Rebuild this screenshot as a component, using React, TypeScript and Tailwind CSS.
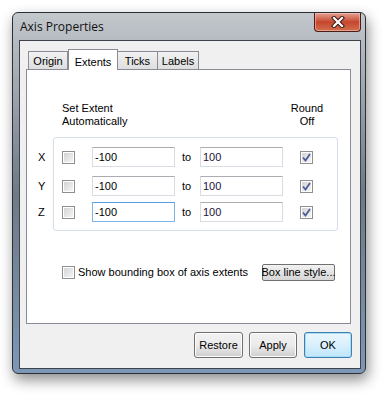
import React from 'react'

const ui = { fontFamily: '"Liberation Sans", Arial, sans-serif' }

const Check = ({ checked = false }: { checked?: boolean }) => (
    <span className="flex h-[13px] w-[13px] shrink-0 items-center justify-center border border-[#8e8f8f] bg-white p-px">
        <span className="flex h-full w-full items-center justify-center bg-gradient-to-br from-[#d4d4d4] to-[#f4f4f4]">
            {checked && (
                <svg width="9" height="9" viewBox="0 0 9 9">
                    <path d="M1 4.5 L3.5 7.5 L8 1" fill="none" stroke="#4a5a95" strokeWidth="1.7" />
                </svg>
            )}
        </span>
    </span>
)

const Field = ({ value, focused = false, dark = false }: { value: string; focused?: boolean; dark?: boolean }) => (
    <div
        className={
            focused
                ? 'flex h-[20px] w-[83px] items-center border border-[#7eb4ea] border-t-[#569de5] bg-white pl-[2px]'
                : 'flex h-[20px] w-[83px] items-center border border-[#d9dde3] border-t-[#abadb3] bg-white pl-[2px]'
        }
    >
        <span className={dark ? 'text-[11px] leading-none text-[#24103a]' : 'text-[11px] leading-none text-black'}>
            {value}
        </span>
    </div>
)

const Button = ({ label, width, primary = false }: { label: string; width: string; primary?: boolean }) => (
    <div
        className={
            'flex h-[26px] items-center justify-center rounded-[3px] border text-[11px] text-black ' +
            width +
            (primary
                ? ' border-[#3c7fb1] bg-gradient-to-b from-[#eaf6fd] via-[#d9f0fc] to-[#bee6fd] shadow-[inset_0_0_0_1px_#a8dcf7]'
                : ' border-[#707070] bg-gradient-to-b from-[#f2f2f2] via-[#ebebeb] to-[#cfcfcf] shadow-[inset_0_0_0_1px_#fcfcfc]')
        }
    >
        {label}
    </div>
)

const rows = [
    { axis: 'X', gap: 'mt-0', focused: false },
    { axis: 'Y', gap: 'mt-[9px]', focused: false },
    { axis: 'Z', gap: 'mt-[6px]', focused: true },
]

export default function App() {
    return (
        <div className="h-[396px] w-[386px] bg-white pl-[12px] pt-[12px]" style={ui}>
            <div className="flex h-[362px] w-[354px] flex-col rounded-[6px] border border-[#2b3036] bg-gradient-to-b from-[#c3c8cd] via-[#6f7a86] to-[#7d97b6] shadow-[2px_6px_14px_rgba(0,0,0,0.45)]">
                {/* title bar */}
                <div className="flex h-[27px] shrink-0 items-start">
                    <span
                        className="ml-[7px] mt-[5px] whitespace-nowrap text-[12px] text-[#111]"
                        style={{ fontFamily: '"Open Sans", "Noto Sans", sans-serif' }}
                    >
                        Axis Properties
                    </span>
                    <div className="ml-auto mr-[4px] flex h-[19px] w-[47px] items-center justify-center rounded-b-[4px] border border-t-0 border-[#4b1d16] bg-gradient-to-b from-[#e3a193] via-[#c6452c] to-[#d2704e] shadow-[inset_0_0_0_1px_rgba(255,210,200,0.5)]">
                        <svg width="14" height="12" viewBox="0 0 14 12">
                            <path d="M3 2 L11 10 M11 2 L3 10" stroke="#3a1a14" strokeWidth="4.2" strokeLinecap="square" />
                            <path d="M3 2 L11 10 M11 2 L3 10" stroke="#ffffff" strokeWidth="2.2" strokeLinecap="square" />
                        </svg>
                    </div>
                </div>

                {/* client area */}
                <div className="ml-[6px] flex h-[329px] w-[342px] flex-col border border-[#3d434a] bg-[#f0f0f0] pl-[6px] pt-[8px]">
                    {/* tabs */}
                    <div className="flex h-[20px] items-end pl-[2px] text-[11px]">
                        <div className="flex h-[18px] w-[40px] items-center justify-center border border-b-0 border-[#898c95] bg-gradient-to-b from-[#f2f2f2] to-[#dedede] pt-px">
                            Origin
                        </div>
                        <div className="relative z-10 -mb-px flex h-[21px] w-[50px] items-start justify-center border border-b-0 border-[#898c95] bg-white pt-[4px]">
                            Extents
                        </div>
                        <div className="flex h-[18px] w-[40px] items-center justify-center border border-b-0 border-l-0 border-[#898c95] bg-gradient-to-b from-[#f2f2f2] to-[#dedede] pt-px">
                            Ticks
                        </div>
                        <div className="flex h-[18px] w-[41px] items-center justify-center border border-b-0 border-l-0 border-[#898c95] bg-gradient-to-b from-[#f2f2f2] to-[#dedede] pt-px">
                            Labels
                        </div>
                    </div>

                    {/* tab panel */}
                    <div className="flex h-[255px] w-[325px] flex-col whitespace-nowrap border border-[#898c95] bg-white text-[11px] text-black">
                        <div className="mt-[32px] flex items-start leading-[13px]">
                            <div className="ml-[35px]">
                                Set Extent
                                <br />
                                Automatically
                            </div>
                            <div className="ml-auto mr-[22px] w-[42px] text-center">
                                Round
                                <br />
                                Off
                            </div>
                        </div>

                        <div className="mt-[9px] flex items-start">
                            <div className="flex w-[26px] flex-col pl-[11px] pt-[10px]">
                                {rows.map((r) => (
                                    <div key={r.axis} className={'flex h-[20px] items-center ' + r.gap}>
                                        {r.axis}
                                    </div>
                                ))}
                            </div>
                            <div className="flex w-[285px] flex-col rounded-[3px] border border-[#d5dfe5] pb-[8px] pt-[9px]">
                                {rows.map((r) => (
                                    <div key={r.axis} className={'flex h-[20px] items-center ' + r.gap}>
                                        <span className="ml-[8px]">
                                            <Check />
                                        </span>
                                        <span className="ml-[17px]">
                                            <Field value="-100" focused={r.focused} />
                                        </span>
                                        <span className="ml-[7px] w-[11px]">to</span>
                                        <span className="ml-[7px]">
                                            <Field value="100" dark />
                                        </span>
                                        <span className="ml-[17px]">
                                            <Check checked />
                                        </span>
                                    </div>
                                ))}
                            </div>
                        </div>

                        <div className="mt-[33px] flex h-[17px] items-center">
                            <span className="ml-[35px]">
                                <Check />
                            </span>
                            <span className="ml-[3px]">Show bounding box of axis extents</span>
                            <div className="ml-auto mr-[15px] flex h-[17px] w-[73px] items-center justify-center rounded-[2px] border border-[#707070] bg-gradient-to-b from-[#f2f2f2] to-[#d6d6d6]">
                                Box line style...
                            </div>
                        </div>
                    </div>

                    {/* dialog buttons */}
                    <div className="mr-[8px] mt-[8px] flex justify-end">
                        <Button label="Restore" width="w-[49px]" />
                        <span className="w-[6px]" />
                        <Button label="Apply" width="w-[48px]" />
                        <span className="w-[7px]" />
                        <Button label="OK" width="w-[48px]" primary />
                    </div>
                </div>
            </div>
        </div>
    )
}
